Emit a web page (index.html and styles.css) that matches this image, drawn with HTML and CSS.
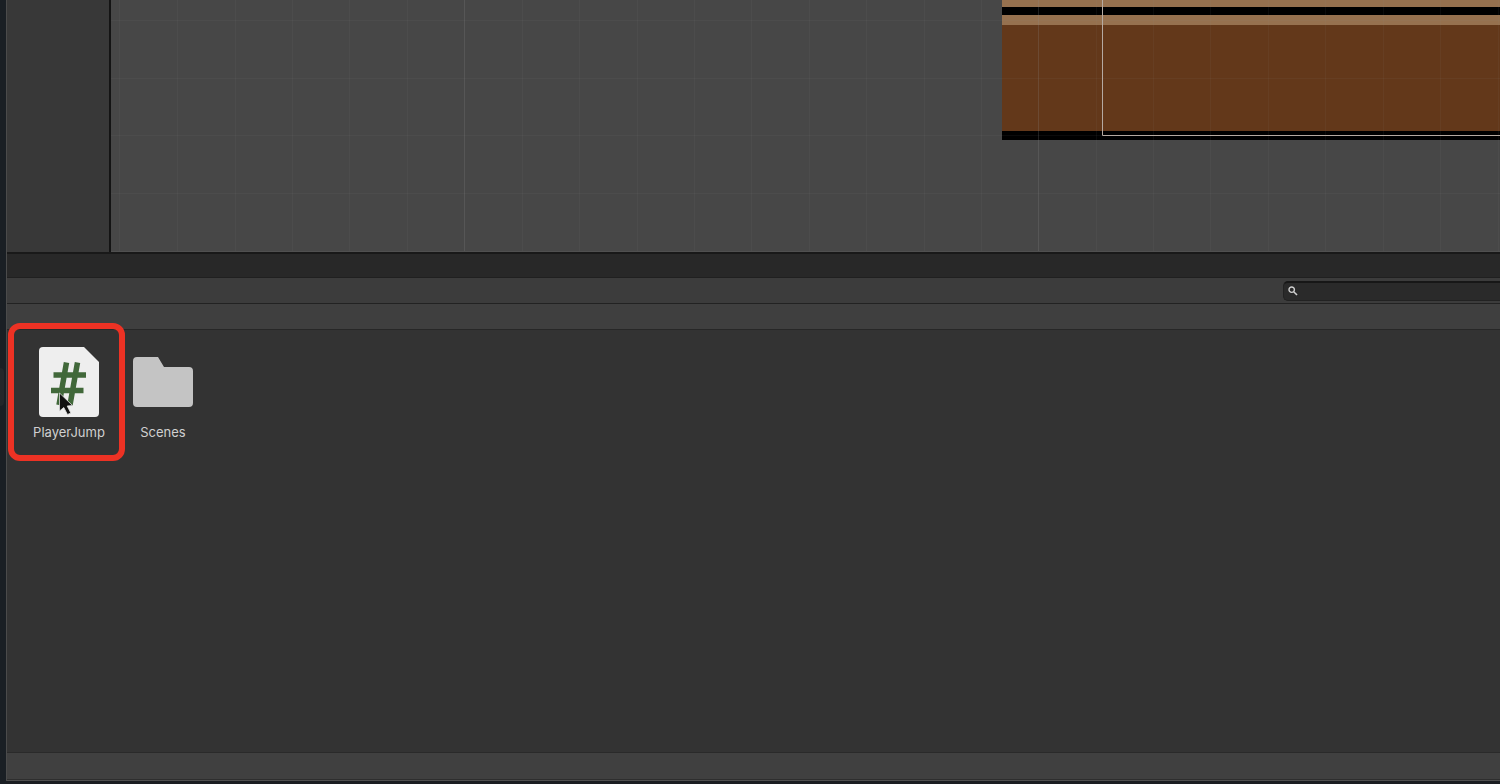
FILE: index.html
```
<!DOCTYPE html>
<html lang="en">
<head>
    <meta charset="UTF-8">
    <meta name="viewport" content="width=device-width, initial-scale=1.0">
    <title>Project</title>
    <link rel="stylesheet" href="styles.css">
</head>
<body>

    <div class="desktop-edge">
        <div class="edge-tab"></div>
    </div>

    <div class="editor">
        <!-- Scene view -->
        <div class="top">
            <div class="side-panel"></div>
            <div class="scene">
                <svg class="scene-canvas" aria-hidden="true">
                    <!-- platform -->
                    <g shape-rendering="crispEdges">
                        <rect x="891" y="0" width="100%" height="140" fill="#000"/>
                        <rect x="891" y="0" width="100%" height="7" fill="#96714f"/>
                        <rect x="891" y="15" width="100%" height="10" fill="#96714f"/>
                        <rect x="891" y="25" width="100%" height="106" fill="#63381a"/>
                    </g>
                    <!-- grid -->
                    <path class="grid-minor" d="M8.5 0V252M66.5 0V252M124.5 0V252M181.5 0V252M238.5 0V252M296.5 0V252M411.5 0V252M468.5 0V252M526.5 0V252M583.5 0V252M640.5 0V252M698.5 0V252M755.5 0V252M813.5 0V252M870.5 0V252M985.5 0V252M1042.5 0V252M1099.5 0V252M1157.5 0V252M1214.5 0V252M1272.5 0V252M1329.5 0V252M1387.5 0V252"/>
                    <path class="grid-minor" d="M0 20.5H3000M0 78.5H3000M0 135.5H3000M0 193.5H3000"/>
                    <path class="grid-major" d="M353.5 0V252M927.5 0V252"/>
                    <!-- camera bounds -->
                    <path class="bounds" d="M991.5 0V135.5H3000"/>
                </svg>
            </div>
        </div>

        <!-- Project window -->
        <div class="tab-bar"></div>
        <div class="toolbar">
            <label class="search">
                <svg width="10" height="10" viewBox="0 0 10 10" aria-hidden="true">
                    <circle cx="3.7" cy="3.7" r="2.7" fill="none" stroke="#d0d0d0" stroke-width="1.4"/>
                    <path d="M5.7 5.7L9 9" stroke="#d0d0d0" stroke-width="1.6" fill="none"/>
                </svg>
                <input type="text" aria-label="Search">
            </label>
        </div>
        <div class="path-bar"></div>

        <div class="assets">
            <button class="asset">
                <svg class="asset-icon" viewBox="0 0 60 70" aria-hidden="true">
                    <path d="M4 0H45L60 15V66Q60 70 56 70H4Q0 70 0 66V4Q0 0 4 0Z" fill="#eee"/>
                    <path d="M27.5 15.5L20 58M38.5 15.5L31 58M14.5 28H47M12 43.5H44.5" stroke="#41683a" stroke-width="5.5" fill="none"/>
                    <path class="pointer" d="M20.5 46V64L24.8 60.5L28.5 67.5L31.8 66L28.2 59L33.5 58.5Z"/>
                </svg>
                <span class="asset-name">PlayerJump</span>
                <span class="highlight"></span>
            </button>
            <button class="asset">
                <svg class="asset-icon" viewBox="0 0 60 70" aria-hidden="true">
                    <path d="M4 10H25L31 20H56Q60 20 60 24V56Q60 60 56 60H4Q0 60 0 56V14Q0 10 4 10Z" fill="#c4c4c4"/>
                </svg>
                <span class="asset-name">Scenes</span>
            </button>
        </div>

        <div class="footer"></div>
    </div>

</body>
</html>
```
FILE: styles.css
```
* {
    margin: 0;
    padding: 0;
    box-sizing: border-box;
}

body {
    display: flex;
    height: 100vh;
    overflow: hidden;
    background: #1b1e22;
    font-family: Inter, "Liberation Sans", sans-serif;
}

.desktop-edge {
    width: 6px;
    padding-top: 368px;
    background: #1a1f24;
}

.edge-tab {
    width: 4px;
    height: 38px;
    border-radius: 0 4px 4px 0;
    background: #24272a;
}

.editor {
    flex: 1;
    min-width: 0;
    display: flex;
    flex-direction: column;
    margin-bottom: 3px;
    border-left: 1px solid #4b4b4b;
    border-bottom: 1px solid #505050;
}

/* Scene view */
.top {
    display: flex;
    height: 254px;
    border-bottom: 2px solid #191919;
}

.side-panel {
    width: 104px;
    background: #383838;
    border-right: 2px solid #141414;
}

.scene {
    flex: 1;
    min-width: 0;
    background: #474747;
    border-bottom: 1px solid #505050;
}

.scene-canvas {
    display: block;
    width: 100%;
    height: 100%;
}

.grid-minor,
.grid-major,
.bounds {
    fill: none;
    stroke: #8c8c8c;
}

.grid-minor {
    stroke-opacity: 0.08;
}

.grid-major {
    stroke-opacity: 0.22;
}

.bounds {
    stroke: #b5aaa2;
}

/* Project window */
.tab-bar {
    height: 24px;
    background: #282828;
    border-bottom: 1px solid #202020;
}

.toolbar {
    display: flex;
    justify-content: flex-end;
    align-items: center;
    height: 26px;
    background: #3c3c3c;
    border-bottom: 1px solid #222;
}

.search {
    display: flex;
    align-items: center;
    gap: 4px;
    width: 217px;
    height: 20px;
    padding-left: 4px;
    background: #2a2a2a;
    border: 1px solid #222;
    border-top: 2px solid #171717;
    border-right: none;
    border-radius: 5px 0 0 5px;
}

.search input {
    flex: 1;
    min-width: 0;
    background: none;
    border: none;
    outline: none;
    color: #d2d2d2;
    font: inherit;
    font-size: 12px;
}

.path-bar {
    height: 26px;
    background: #3f3f3f;
    border-bottom: 1px solid #272727;
}

.assets {
    flex: 1;
    display: flex;
    align-items: flex-start;
    gap: 4px;
    padding: 17px;
    background: #333;
}

.asset {
    position: relative;
    display: flex;
    flex-direction: column;
    align-items: center;
    gap: 7px;
    width: 90px;
    background: none;
    border: none;
    font: inherit;
    cursor: pointer;
}

.asset-icon {
    width: 60px;
    height: 70px;
}

.asset-name {
    color: #d0d0d0;
    font-size: 13px;
    line-height: 16px;
}

.pointer {
    fill: #111;
    stroke: #ddd;
    stroke-width: 0.8;
}

/* Red frame around the script */
.highlight {
    position: absolute;
    top: -24px;
    left: -16px;
    width: 117px;
    height: 138px;
    border: 6px solid #ed3224;
    border-radius: 12px;
}

.footer {
    height: 28px;
    background: #404040;
    border-top: 1px solid #2a2a2a;
    border-bottom: 1px solid #2e2e2e;
}
```
